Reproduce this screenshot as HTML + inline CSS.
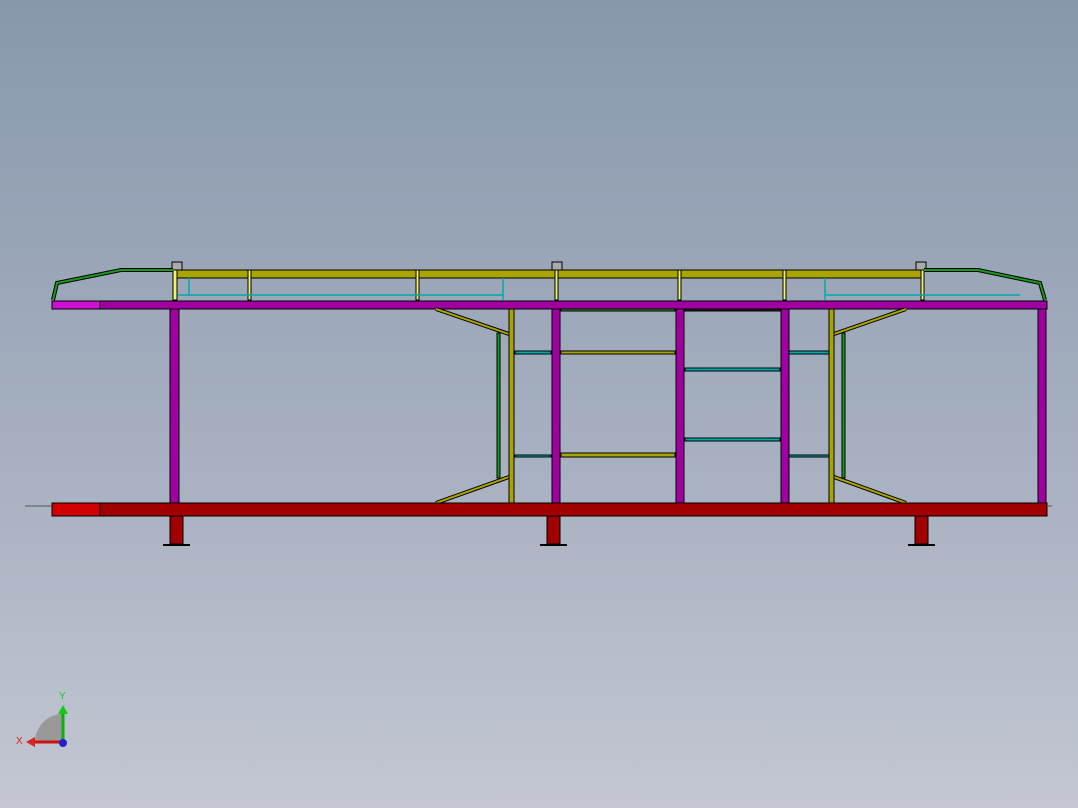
<!DOCTYPE html><html><head><style>body{margin:0;width:1078px;height:808px;overflow:hidden;background:linear-gradient(#8898ac,#a9b2c2 60%,#c4c7d3);}svg{position:absolute;left:0;top:0}</style></head><body>
<svg width="1078" height="808" viewBox="0 0 1078 808" stroke="#000" stroke-width="1">
<!-- top yellow rail -->
<rect x="174" y="270" width="750" height="8" fill="#a9a400"/>
<g fill="#f4f070"><rect x="173" y="270" width="4" height="30"/><rect x="248" y="270" width="3" height="30"/><rect x="416" y="270" width="3" height="30"/><rect x="555" y="270" width="3" height="30"/><rect x="678" y="270" width="3" height="30"/><rect x="783" y="270" width="3" height="30"/><rect x="921" y="270" width="3" height="30"/></g>
<g stroke="#0aa" stroke-width="1.5"><line x1="178" y1="295" x2="503" y2="295"/><line x1="826" y1="295" x2="1020" y2="295"/><line x1="189" y1="278" x2="189" y2="295"/><line x1="503" y1="278" x2="503" y2="300"/><line x1="825" y1="278" x2="825" y2="300"/></g>
<g fill="#aaa"><rect x="172" y="262" width="10" height="8"/><rect x="552" y="262" width="10" height="8"/><rect x="916" y="262" width="10" height="8"/></g>
<!-- green ends -->
<polyline points="53,300 57,283 121,270 173,270" fill="none" stroke="#000" stroke-width="4"/>
<polyline points="53,300 57,283 121,270 173,270" fill="none" stroke="#1a9a1a" stroke-width="2"/>
<polyline points="1045,300 1040,283 978,270 924,270" fill="none" stroke="#000" stroke-width="4"/>
<polyline points="1045,300 1040,283 978,270 924,270" fill="none" stroke="#1a9a1a" stroke-width="2"/>
<!-- magenta top beam -->
<rect x="52" y="301" width="995" height="8" fill="#a000a0"/>
<rect x="52" y="301" width="48" height="8" fill="#d010d0"/>
<!-- diagonals -->
<g stroke="#000" stroke-width="4"><line x1="436" y1="309" x2="509" y2="334"/><line x1="436" y1="503" x2="509" y2="477"/><line x1="906" y1="309" x2="834" y2="334"/><line x1="906" y1="503" x2="834" y2="477"/></g>
<g stroke="#a9a400" stroke-width="2"><line x1="436" y1="309" x2="509" y2="334"/><line x1="436" y1="503" x2="509" y2="477"/><line x1="906" y1="309" x2="834" y2="334"/><line x1="906" y1="503" x2="834" y2="477"/></g>
<!-- horizontals -->
<g fill="#0aa"><rect x="515" y="351" width="36" height="3"/><rect x="515" y="455" width="36" height="2"/><rect x="789" y="351" width="40" height="3"/><rect x="789" y="455" width="40" height="2"/><rect x="685" y="368" width="95" height="3"/><rect x="685" y="438" width="95" height="3"/></g>
<g fill="#a9a400"><rect x="561" y="351" width="114" height="3"/><rect x="561" y="453" width="114" height="4"/></g>
<rect x="561" y="309" width="114" height="2" fill="#1a9a1a"/>
<rect x="685" y="309" width="95" height="2" fill="#222"/>
<!-- verticals -->
<g fill="#1a9a1a"><rect x="497" y="333" width="3" height="145"/><rect x="842" y="333" width="3" height="145"/></g>
<g fill="#a9a400"><rect x="509" y="309" width="5" height="194"/><rect x="829" y="309" width="5" height="194"/></g>
<g fill="#a000a0"><rect x="170" y="309" width="9" height="194"/><rect x="552" y="309" width="8" height="194"/><rect x="676" y="309" width="8" height="194"/><rect x="781" y="309" width="8" height="194"/><rect x="1038" y="309" width="8" height="194"/></g>
<!-- red bottom -->
<rect x="52" y="503" width="995" height="13" fill="#a00000"/>
<rect x="52" y="503" width="48" height="13" fill="#d00000"/>
<line x1="25" y1="506" x2="52" y2="506" stroke="#555"/><line x1="1047" y1="506" x2="1052" y2="506" stroke="#555"/>
<g fill="#a00000"><rect x="170" y="516" width="13" height="28"/><rect x="547" y="516" width="13" height="28"/><rect x="915" y="516" width="13" height="28"/></g>
<g stroke-width="2"><line x1="163" y1="545" x2="190" y2="545"/><line x1="540" y1="545" x2="567" y2="545"/><line x1="908" y1="545" x2="935" y2="545"/></g>
<!-- triad -->
<path d="M35,742 A28,28 0 0 1 63,714 L63,742 Z" fill="#999" stroke="none"/>
<line x1="63" y1="742" x2="63" y2="712" stroke="#1a1" stroke-width="3"/><path d="M58,714 L63,705 L68,714Z" fill="#1c1" stroke="none"/>
<line x1="63" y1="742" x2="34" y2="742" stroke="#c11" stroke-width="3"/><path d="M35,737 L26,742 L35,747Z" fill="#d22" stroke="none"/>
<circle cx="63" cy="743" r="4" fill="#22c" stroke="none"/>
<text x="59" y="699" font-family="Liberation Sans" font-size="10" fill="#1c1" stroke="none">Y</text>
<text x="16" y="744" font-family="Liberation Sans" font-size="10" fill="#d22" stroke="none">X</text>
</svg></body></html>
